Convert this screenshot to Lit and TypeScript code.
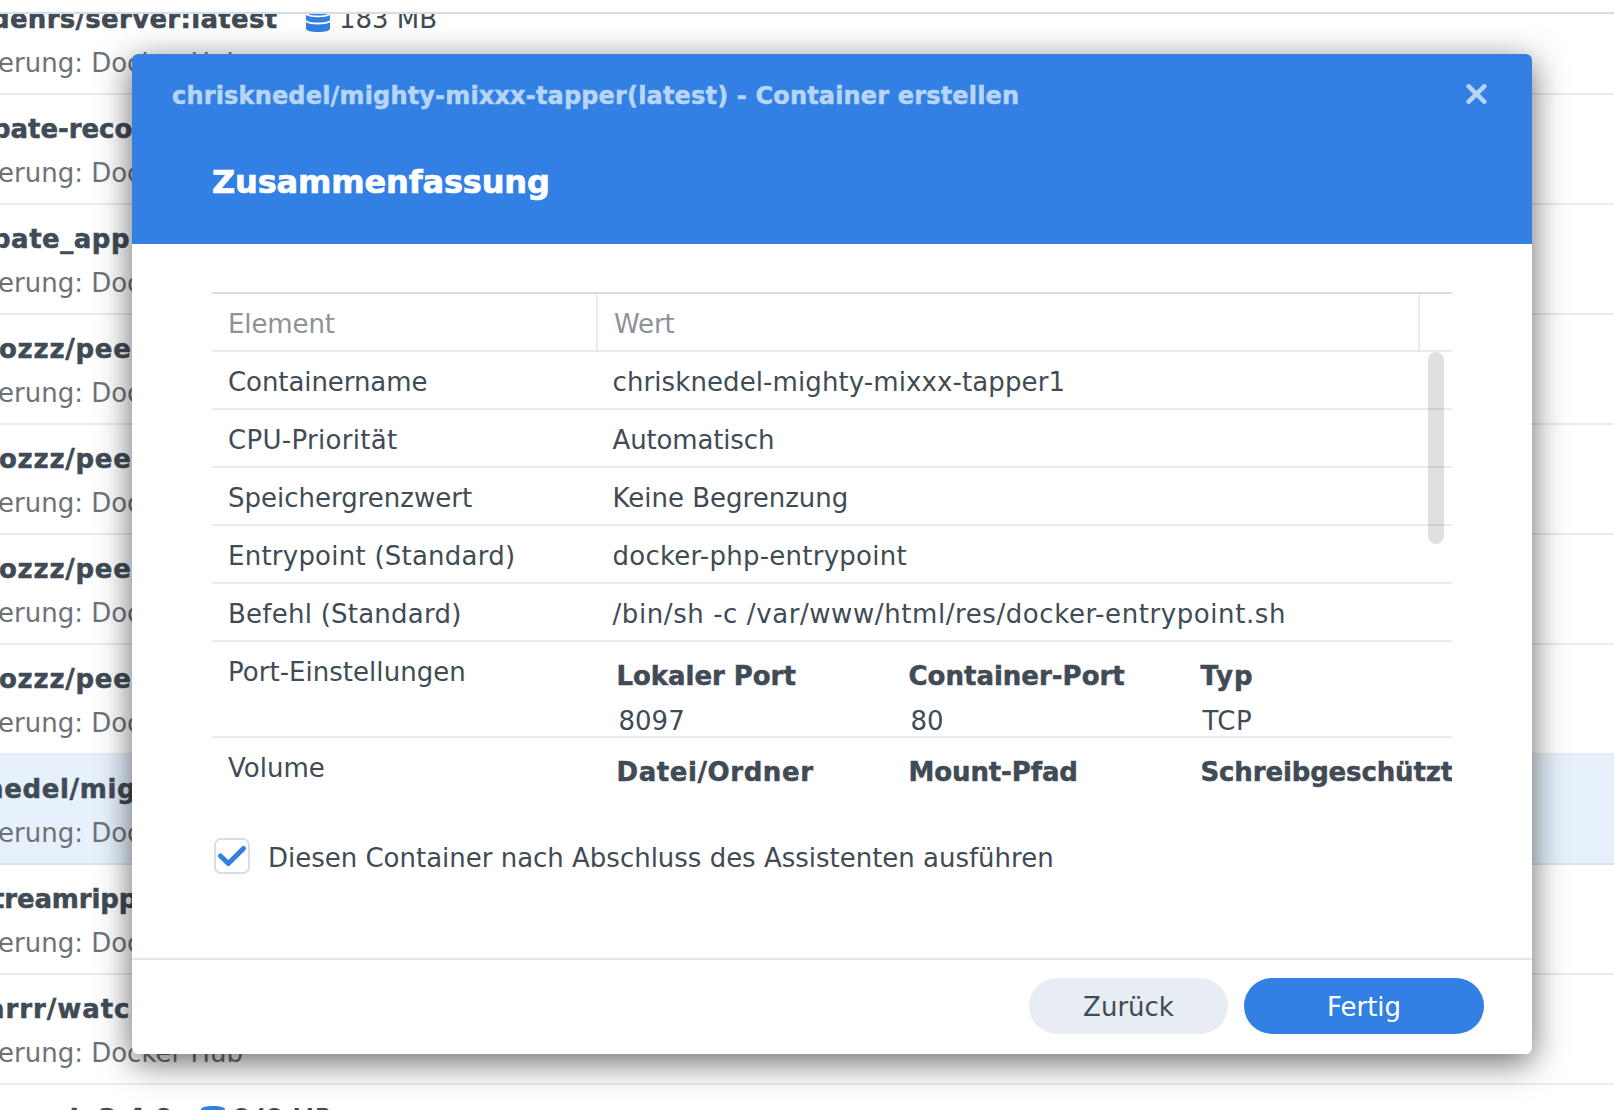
import { LitElement, html, css, svg } from "lit";
import { customElement, property } from "lit/decorators.js";
import { classMap } from "lit/directives/class-map.js";
import { styleMap } from "lit/directives/style-map.js";

interface ImageEntry {
  name: string;
  shift: number;
  tracking: number;
  size?: string;
  selected?: boolean;
}

const IMAGES: ImageEntry[] = [
  { name: "denrs/server:latest", shift: -9, tracking: 0.3, size: "183 MB" },
  { name: "pate-recorder", shift: -8, tracking: -0.05 },
  { name: "pate_app:latest", shift: -8, tracking: 0.5 },
  { name: "ozzz/peertube", shift: -1, tracking: 0.75 },
  { name: "ozzz/peertube", shift: -1, tracking: 0.75 },
  { name: "ozzz/peertube", shift: -1, tracking: 0.75 },
  { name: "ozzz/peertube", shift: -1, tracking: 0.75 },
  { name: "nedel/mighty", shift: -15, tracking: 0.65, selected: true },
  { name: "treamripper", shift: -8, tracking: -0.15 },
  { name: "arrr/watch", shift: -13, tracking: 0.95 },
  { name: "arch:2.4.0", shift: 24, tracking: 0, size: "242 MB" },
];

const track = (value: number) => styleMap({ letterSpacing: `${value}px` });

const diskIcon = svg`<svg class="disk" width="24" height="26" viewBox="0 0 24 26" fill="#3280e3">
  <path d="M0 3.600C0 1.400 5 0 12 0s12 1.400 12 3.600V7c-2 1.700-7 2.500-12 2.500S2 8.700 0 7z"/>
  <path d="M0 9c2.500 1.500 7 2.200 12 2.200s9.500-.7 12-2.200v5.200c-2 1.600-7 2.400-12 2.400S2 15.800 0 14.200z"/>
  <path d="M0 16.200c2.500 1.500 7 2.200 12 2.200s9.500-.7 12-2.200v6.200C24 24.600 19 26 12 26S0 24.600 0 22.400z"/>
</svg>`;

@customElement("image-list")
class ImageList extends LitElement {
  static styles = css`
    :host { display: block; }
    .list { box-sizing: border-box; height: 1098px; border-top: 2px solid #d5dee7; overflow: hidden; white-space: nowrap; }
    .row { box-sizing: border-box; height: 110px; padding-top: 12px; border-bottom: 2px solid #e7ecf1; }
    .row:first-child { margin-top: -29px; }
    .row.selected { background: #e6f1fc; border-bottom-color: #d6e2ee; }
    .title { display: flex; align-items: center; height: 44px; color: #414b55; font-size: 26px; line-height: 44px; }
    .name { font-weight: bold; -webkit-text-stroke: 0.5px currentColor; }
    .disk { margin: 0 9px 0 28.5px; flex: none; }
    .source { color: #6e7276; font-size: 26px; line-height: 44px; margin-left: -2px; }
  `;
  render() {
    return html`<div class="list">
      ${IMAGES.map(
        (i) => html`<div class=${classMap({ row: true, selected: !!i.selected })}>
          <div class="title" style=${styleMap({ marginLeft: `${i.shift}px` })}>
            <span class="name" style=${track(i.tracking)}>${i.name}</span>
            ${i.size ? html`${diskIcon}<span>${i.size}</span>` : ""}
          </div>
          <div class="source">erung: Docker Hub</div>
        </div>`
      )}
    </div>`;
  }
}

type Text = [text: string, tracking: number];

interface SummaryRow {
  label: Text;
  value?: Text;
  columns?: Text[];
  entries?: Text[];
}

const SUMMARY: SummaryRow[] = [
  { label: ["Containername", -0.08], value: ["chrisknedel-mighty-mixxx-tapper1", 0.1] },
  { label: ["CPU-Priorität", 0.3], value: ["Automatisch", -0.15] },
  { label: ["Speichergrenzwert", 0], value: ["Keine Begrenzung", 0] },
  { label: ["Entrypoint (Standard)", 0.24], value: ["docker-php-entrypoint", 0.25] },
  { label: ["Befehl (Standard)", 0.24], value: ["/bin/sh -c /var/www/html/res/docker-entrypoint.sh", 0.58] },
  {
    label: ["Port-Einstellungen", 0.03],
    columns: [["Lokaler Port", -0.05], ["Container-Port", 0], ["Typ", 0.9]],
    entries: [["8097", 0], ["80", 0], ["TCP", 0.5]],
  },
  { label: ["Volume", 0], columns: [["Datei/Ordner", 0.58], ["Mount-Pfad", -0.12], ["Schreibgeschützt", -0.14]] },
];

@customElement("summary-grid")
class SummaryGrid extends LitElement {
  static styles = css`
    :host { display: block; }
    .grid { position: relative; height: 508px; overflow: hidden; border-top: 2px solid #d5dee7; white-space: nowrap; font-size: 26px; line-height: 52px; color: #414b55; }
    .row { box-sizing: border-box; height: 58px; display: grid; grid-template-columns: 386px 1fr; border-bottom: 2px solid #e7ecf1; }
    .row.tall { height: 96px; }
    .row.last { border-bottom: 0; }
    .head { grid-template-columns: 386px 822px 1fr; color: #8d9298; letter-spacing: -0.1px; }
    .cell { padding: 4px 0 0 16px; }
    .value { padding-left: 14.5px; }
    .head .cell:not(:first-child) { border-left: 2px solid #e7ecf1; margin-left: -2px; padding-left: 16px; }
    .nested { padding: 9px 0 0 18.5px; display: grid; grid-template-columns: 292px 292px auto; line-height: 50px; grid-auto-rows: 45px; }
    .key { font-weight: bold; -webkit-text-stroke: 0.5px currentColor; }
    .entry { padding-left: 2px; }
    .thumb { position: absolute; top: 58px; right: 8px; width: 16px; height: 192px; border-radius: 8px; background: rgba(0, 0, 0, 0.12); }
  `;
  render() {
    return html`<div class="grid">
      <div class="row head"><div class="cell">Element</div><div class="cell">Wert</div><div class="cell"></div></div>
      ${SUMMARY.map(
        (r, n) => html`<div class=${classMap({ row: true, tall: !!r.columns, last: n === SUMMARY.length - 1 })}>
          <div class="cell" style=${track(r.label[1])}>${r.label[0]}</div>
          ${r.value
            ? html`<div class="cell value" style=${track(r.value[1])}>${r.value[0]}</div>`
            : html`<div class="nested">
                ${(r.columns ?? []).map(([t, s]) => html`<div class="key" style=${track(s)}>${t}</div>`)}
                ${(r.entries ?? []).map(([t, s]) => html`<div class="entry" style=${track(s)}>${t}</div>`)}
              </div>`}
        </div>`
      )}
      <div class="thumb"></div>
    </div>`;
  }
}

@customElement("wizard-dialog")
class WizardDialog extends LitElement {
  @property() heading = "";
  static styles = css`
    :host { display: flex; flex-direction: column; box-sizing: border-box; width: 1400px; height: 1000px; background: #fff; border-radius: 6px; overflow: hidden; box-shadow: 0 8px 34px rgba(0, 0, 0, 0.6); color: #414b55; font-size: 26px; }
    .header { box-sizing: border-box; height: 190px; background: #3280e3; padding: 20px 45px 0 40px; }
    .bar { display: flex; justify-content: space-between; align-items: center; height: 40px; }
    .heading { color: #b7d5f6; font-size: 24px; font-weight: bold; line-height: 40px; padding-top: 3px; white-space: nowrap; letter-spacing: 0.17px; -webkit-text-stroke: 0.5px currentColor; }
    .step { color: #fff; font-size: 32px; font-weight: bold; line-height: 44px; margin: 45.5px 0 0 40px; letter-spacing: -0.14px; -webkit-text-stroke: 0.7px currentColor; }
    .body { flex: 1; padding: 48px 80px 0; }
    .check { display: flex; align-items: center; gap: 18px; height: 36px; margin: 36px 0 0 2px; }
    .label { padding-top: 4px; letter-spacing: -0.01px; white-space: nowrap; }
    .footer { box-sizing: border-box; height: 96px; border-top: 2px solid #e1e6ee; padding: 18px 48px 0 0; display: flex; justify-content: flex-end; gap: 16px; }
    .button { box-sizing: border-box; height: 56px; border: 0; border-radius: 28px; font: inherit; padding: 2px 0 0; background: #e7edf2; color: #414b55; width: 199px; }
    .primary { width: 240px; background: #3280e3; color: #fff; }
  `;
  render() {
    return html`
      <div class="header">
        <div class="bar">
          <div class="heading">${this.heading}</div>
          <svg width="21" height="20" viewBox="0 0 21 20" fill="none" stroke="#b7d5f6" stroke-width="4.500" stroke-linecap="round"><path d="M2.700 2.300L18.300 17.700M18.300 2.300L2.700 17.700"/></svg>
        </div>
        <div class="step">Zusammenfassung</div>
      </div>
      <div class="body">
        <summary-grid></summary-grid>
        <div class="check">
          <svg width="36" height="36" viewBox="0 0 36 36" fill="none"><rect x="1" y="1" width="34" height="34" rx="6" stroke="#d5dfe8" stroke-width="2"/><path d="M6.500 18L14.300 25.500L29.500 10.500" stroke="#3280e3" stroke-width="5" stroke-linecap="round" stroke-linejoin="round"/></svg>
          <span class="label">Diesen Container nach Abschluss des Assistenten ausführen</span>
        </div>
      </div>
      <div class="footer">
        <button class="button">Zurück</button>
        <button class="button primary">Fertig</button>
      </div>
    `;
  }
}

@customElement("app-root")
class AppRoot extends LitElement {
  static styles = css`
    :host { display: block; box-sizing: border-box; position: relative; width: 1614px; height: 1110px; padding-top: 12px; overflow: hidden; background: #fff; font-family: Verdana, "DejaVu Sans", sans-serif; }
    .dialog { position: absolute; left: 132px; top: 54px; }
  `;
  render() {
    return html`<image-list></image-list>
      <wizard-dialog class="dialog" heading="chrisknedel/mighty-mixxx-tapper(latest) - Container erstellen"></wizard-dialog>`;
  }
}
